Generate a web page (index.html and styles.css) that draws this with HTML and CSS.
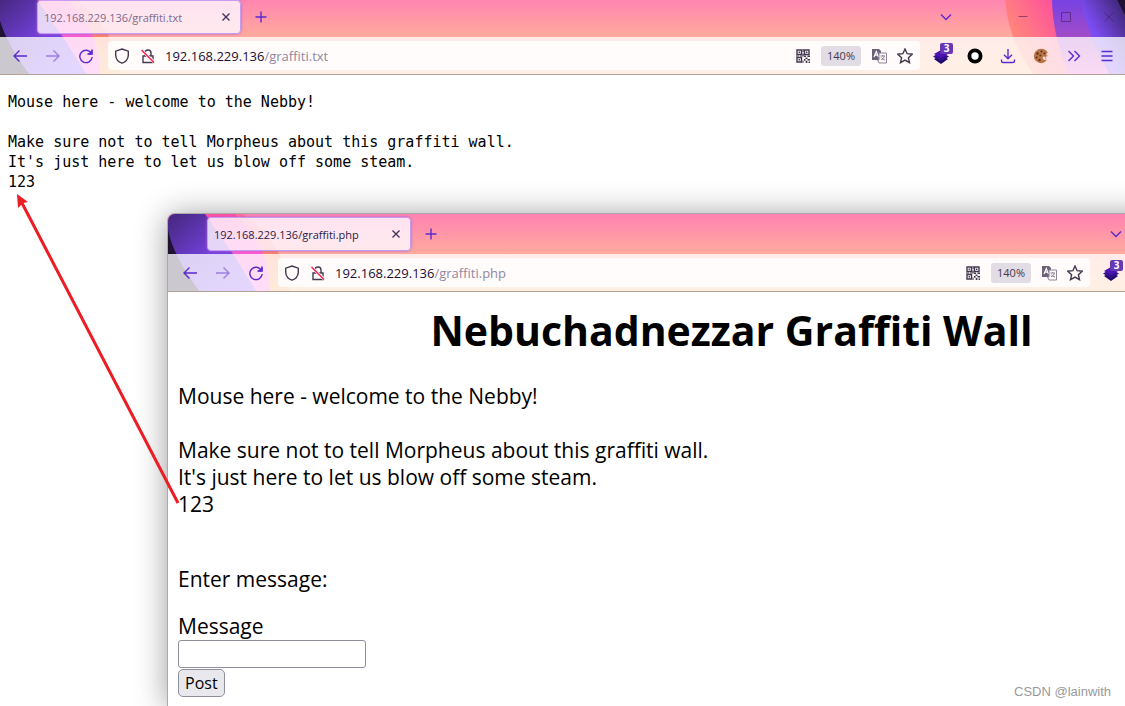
FILE: index.html
```html
<!DOCTYPE html>
<html lang="en">
<head>
<meta charset="utf-8">
<title>Graffiti wall</title>
<link rel="stylesheet" href="styles.css">
</head>
<body>
<svg class="defs" aria-hidden="true">
  <defs>
    <linearGradient id="g-violet" x1="0" y1="0" x2="1" y2="1"><stop offset="0" stop-color="#43267c"/><stop offset=".5" stop-color="#7442dd"/><stop offset="1" stop-color="#8a55ff"/></linearGradient>
    <linearGradient id="g-magenta" x1="0" y1="0" x2="0" y2="1"><stop offset="0" stop-color="#ff4fa0"/><stop offset=".5" stop-color="#ff5cd0"/><stop offset="1" stop-color="#ff70e0"/></linearGradient>
    <linearGradient id="g-peach" x1="0" y1="0" x2="0" y2="1"><stop offset="0" stop-color="#ff709c"/><stop offset=".5" stop-color="#ff8466"/><stop offset="1" stop-color="#ffac60"/></linearGradient>
    <linearGradient id="g-hot" x1="0" y1=".4" x2="1" y2="0"><stop offset="0" stop-color="#ff8a78"/><stop offset=".5" stop-color="#ff4d9f"/><stop offset="1" stop-color="#ff45a5"/></linearGradient>
    <linearGradient id="g-plum" x1="0" y1="0" x2="0" y2="1"><stop offset="0" stop-color="#7441e6"/><stop offset=".5" stop-color="#a04cc8"/><stop offset="1" stop-color="#f060d0"/></linearGradient>
    <linearGradient id="g-night" x1="1" y1="0" x2="0" y2="1"><stop offset="0" stop-color="#35205f"/><stop offset=".55" stop-color="#7a4bf0"/><stop offset="1" stop-color="#8a5cff"/></linearGradient>
  </defs>
  <symbol id="theme-left" viewBox="0 0 130 78">
    <path fill="url(#g-peach)" d="M0 0H75C100 18 118 42 123 78H0Z"/>
    <path fill="url(#g-magenta)" d="M0 0H67C88 20 102 44 102 78H0Z"/>
    <path fill="url(#g-violet)" d="M0 0H37L65 40L89 78H0Z"/>
    <path fill="#1f1233" d="M0 16Q6 44 32 78H0Z"/>
  </symbol>
  <symbol id="theme-right" viewBox="0 0 140 78">
    <path fill="url(#g-hot)" d="M20 0Q22 42 49 78H140V0Z"/>
    <path fill="url(#g-plum)" d="M67 0Q67 38 84 78H140V0Z"/>
    <path fill="url(#g-night)" d="M95 0Q103 40 125 78H140V0Z"/>
    <path fill="#1f1233" d="M131 0Q135 9 140 18V0Z"/>
  </symbol>
  <symbol id="i-back" viewBox="0 0 16 16"><path d="M15 8H2M7.5 2.5L2 8l5.500 5.500"/></symbol>
  <symbol id="i-forward" viewBox="0 0 16 16"><path d="M1 8h13M8.500 2.500L14 8l-5.500 5.500"/></symbol>
  <symbol id="i-reload" viewBox="0 0 16 16"><path d="M13.500 5.500A6.200 6.200 0 1 0 14.200 9M14 1.500V6H9.500" /><path fill="currentColor" d="M14.500 1.500V6.500H9.500Z" stroke="none"/></symbol>
  <symbol id="i-shield" viewBox="0 0 16 16"><path d="M8 1L14.300 3.200V7.500C14 11.500 11.500 14 8 15.200C4.500 14 2 11.500 1.700 7.500V3.200Z"/></symbol>
  <symbol id="i-lock" viewBox="0 0 16 16"><path d="M3 8h10v6.500H3ZM5 8V5a3 3 0 0 1 6 0V8"/><path stroke="#fff" stroke-width="3" d="M2 2.500L14 14"/><path stroke="#ff2450" stroke-width="1.600" d="M1.500 2L14 14.500"/></symbol>
  <symbol id="i-qr" viewBox="0 0 16 16"><path d="M2 2h4.500v4.500H2ZM9.500 2H14v4.500H9.500ZM2 9.500h4.500V14H2Z"/><path stroke="none" fill="currentColor" d="M3.600 3.600h1.400v1.400H3.600ZM11 3.600h1.400v1.400H11ZM3.600 11H5v1.400H3.600ZM7.500 1h1.200v3H7.500ZM7.300 5.500h1.400v3H7.300ZM1 7.500h3v1H1ZM5 7.500h2v1H5ZM9 7.500h2v1.500H9ZM12.500 7.500H15v1.500h-2.500ZM10.500 9.500h2V11h-2ZM9 11h1.500v1.700H9ZM12.500 11H15v1.500h-2.500ZM10.700 12.700h1.700V15h-1.700ZM7.500 12.500h1V15h-1ZM13.500 13.500H15V15h-1.500Z"/></symbol>
  <symbol id="i-translate" viewBox="0 0 16 16"><path fill="#6c6378" stroke="none" d="M1 1h7l2 2v9H1Z"/><path stroke="#fff" stroke-width="1.200" d="M3 9L5.300 3.500L7.500 9M3.800 7.200h3"/><path stroke="#8d869a" stroke-width="1" fill="#fff8f8" d="M8 5h7.500v10H8L6.500 12H8Z"/><path stroke="#8d869a" stroke-width="1" d="M9.500 8h4.500M11.700 7v1M13.500 8Q12.500 11 10 12M10.200 9.500Q11.500 11.500 14 12"/></symbol>
  <symbol id="i-star" viewBox="0 0 16 16"><path d="M8 1L10.100 5.700L15.200 6.200L11.400 9.700L12.500 14.700L8 12.100L3.500 14.700L4.600 9.700L.8 6.200L5.900 5.700Z"/></symbol>
  <symbol id="i-layers" viewBox="0 0 20 20"><path stroke="none" fill="#1e0866" d="M2 13L9 9l7 4-7 5Z"/><path stroke="none" fill="#32108e" d="M1 10.500L9 6l8 4.500-8 5Z"/><path stroke="none" fill="#4b12b4" d="M2 8L9 4l7 4-7 4Z"/></symbol>
  <symbol id="i-ring" viewBox="0 0 16 16"><circle cx="8" cy="8" r="7.500" fill="#000" stroke="none"/><circle cx="8" cy="8" r="3.700" fill="#fff" stroke="none"/></symbol>
  <symbol id="i-download" viewBox="0 0 16 16"><path d="M8 1v9.500M4 6.800l4 4 4-4M1.500 11.500V13a1.500 1.500 0 0 0 1.500 1.500h10a1.500 1.500 0 0 0 1.500-1.500V11.500"/></symbol>
  <symbol id="i-cookie" viewBox="0 0 16 16"><path fill="#b97548" stroke="none" d="M8 .8C11.500.8 14 2.500 14.800 5L12.800 6L14.800 8L12 9L10 8.500L9.800 11L12 12L14 11.500C12.500 14 10.500 15.200 8 15.200A7.200 7.200 0 0 1 8 .8Z"/><g fill="#603016" stroke="none"><circle cx="4.500" cy="5.500" r="1.200"/><circle cx="8.500" cy="3.500" r="1.100"/><circle cx="7.300" cy="7.500" r="1"/><circle cx="3.500" cy="9.500" r="1"/><circle cx="6.500" cy="12" r="1.200"/><circle cx="11.500" cy="5.500" r="1"/></g><circle cx="12.500" cy="10" r=".8" fill="#c78357" stroke="none"/></symbol>
  <symbol id="i-more" viewBox="0 0 16 16"><path d="M2.500 3L7.500 8l-5 5M8.500 3l5 5-5 5"/></symbol>
  <symbol id="i-menu" viewBox="0 0 16 16"><path d="M2.500 3.500h11M2.500 8h11M2.500 12.500h11"/></symbol>
  <symbol id="i-plus" viewBox="0 0 16 16"><path d="M8 2.500v11M2.500 8h11"/></symbol>
  <symbol id="i-chevron" viewBox="0 0 16 16"><path d="M3 5.500l5 5 5-5"/></symbol>
  <symbol id="i-close" viewBox="0 0 16 16"><path d="M4.500 4.500l7 7M11.500 4.500l-7 7"/></symbol>
  <symbol id="i-winclose" viewBox="0 0 16 16"><path d="M3.500 3.500l9 9M12.500 3.500l-9 9"/></symbol>
  <symbol id="i-max" viewBox="0 0 16 16"><path d="M3.500 3.500h9v9h-9Z"/></symbol>
  <symbol id="i-min" viewBox="0 0 16 16"><path d="M3.500 7.500h9"/></symbol>
</svg>

<main class="desktop">
  <section class="window window-back" aria-label="graffiti.txt">
    <header class="chrome">
      <svg class="theme theme-left"><use href="#theme-left"/></svg>
      <svg class="theme theme-right"><use href="#theme-right"/></svg>
      <div class="tabstrip">
        <div class="tab tab-dim"><span class="tab-title">192.168.229.136/graffiti.txt</span><button class="tab-close" aria-label="Close tab"><svg class="icon"><use href="#i-close"/></svg></button></div>
        <button class="tool" aria-label="New tab"><svg class="icon"><use href="#i-plus"/></svg></button>
        <div class="win-controls">
          <button class="list-tabs" aria-label="List all tabs"><svg class="icon"><use href="#i-chevron"/></svg></button>
          <button class="win-button" aria-label="Minimize"><svg class="icon thin"><use href="#i-min"/></svg></button>
          <button class="win-button" aria-label="Maximize"><svg class="icon thin"><use href="#i-max"/></svg></button>
          <button class="win-button" aria-label="Close"><svg class="icon thin"><use href="#i-winclose"/></svg></button>
        </div>
      </div>
      <nav class="toolbar">
        <button class="tool" aria-label="Back"><svg class="icon"><use href="#i-back"/></svg></button>
        <button class="tool" aria-label="Forward" disabled><svg class="icon"><use href="#i-forward"/></svg></button>
        <button class="tool" aria-label="Reload"><svg class="icon"><use href="#i-reload"/></svg></button>
        <div class="urlbar">
          <button class="url-tool" aria-label="Tracking protection"><svg class="icon"><use href="#i-shield"/></svg></button>
          <button class="url-tool" aria-label="Connection not secure"><svg class="icon"><use href="#i-lock"/></svg></button>
          <div class="address" role="textbox" contenteditable="true" spellcheck="false" aria-label="Address">192.168.229.136<span class="path">/graffiti.txt</span></div>
          <button class="url-tool" aria-label="QR code"><svg class="icon"><use href="#i-qr"/></svg></button>
          <button class="zoom">140%</button>
          <button class="url-tool" aria-label="Translate"><svg class="icon"><use href="#i-translate"/></svg></button>
          <button class="url-tool" aria-label="Bookmark"><svg class="icon"><use href="#i-star"/></svg></button>
        </div>
        <button class="tool" aria-label="Layers"><svg class="icon icon-large"><use href="#i-layers"/></svg><span class="badge">3</span></button>
        <button class="tool" aria-label="Ring"><svg class="icon"><use href="#i-ring"/></svg></button>
        <button class="tool" aria-label="Downloads"><svg class="icon"><use href="#i-download"/></svg></button>
        <button class="tool" aria-label="Cookies"><svg class="icon"><use href="#i-cookie"/></svg></button>
        <button class="tool" aria-label="More tools"><svg class="icon"><use href="#i-more"/></svg></button>
        <button class="tool" aria-label="Menu"><svg class="icon"><use href="#i-menu"/></svg></button>
      </nav>
    </header>
    <pre class="plain">Mouse here - welcome to the Nebby!

Make sure not to tell Morpheus about this graffiti wall.
It's just here to let us blow off some steam.
123</pre>
  </section>

  <section class="window window-front" aria-label="graffiti.php">
    <header class="chrome">
      <svg class="theme theme-left"><use href="#theme-left"/></svg>
      <svg class="theme theme-right"><use href="#theme-right"/></svg>
      <div class="tabstrip">
        <div class="tab"><span class="tab-title">192.168.229.136/graffiti.php</span><button class="tab-close" aria-label="Close tab"><svg class="icon"><use href="#i-close"/></svg></button></div>
        <button class="tool" aria-label="New tab"><svg class="icon"><use href="#i-plus"/></svg></button>
        <div class="win-controls">
          <button class="list-tabs" aria-label="List all tabs"><svg class="icon"><use href="#i-chevron"/></svg></button>
          <button class="win-button" aria-label="Minimize"><svg class="icon thin"><use href="#i-min"/></svg></button>
          <button class="win-button" aria-label="Maximize"><svg class="icon thin"><use href="#i-max"/></svg></button>
          <button class="win-button" aria-label="Close"><svg class="icon thin"><use href="#i-winclose"/></svg></button>
        </div>
      </div>
      <nav class="toolbar">
        <button class="tool" aria-label="Back"><svg class="icon"><use href="#i-back"/></svg></button>
        <button class="tool" aria-label="Forward" disabled><svg class="icon"><use href="#i-forward"/></svg></button>
        <button class="tool" aria-label="Reload"><svg class="icon"><use href="#i-reload"/></svg></button>
        <div class="urlbar">
          <button class="url-tool" aria-label="Tracking protection"><svg class="icon"><use href="#i-shield"/></svg></button>
          <button class="url-tool" aria-label="Connection not secure"><svg class="icon"><use href="#i-lock"/></svg></button>
          <div class="address" role="textbox" contenteditable="true" spellcheck="false" aria-label="Address">192.168.229.136<span class="path">/graffiti.php</span></div>
          <button class="url-tool" aria-label="QR code"><svg class="icon"><use href="#i-qr"/></svg></button>
          <button class="zoom">140%</button>
          <button class="url-tool" aria-label="Translate"><svg class="icon"><use href="#i-translate"/></svg></button>
          <button class="url-tool" aria-label="Bookmark"><svg class="icon"><use href="#i-star"/></svg></button>
        </div>
        <button class="tool" aria-label="Layers"><svg class="icon icon-large"><use href="#i-layers"/></svg><span class="badge">3</span></button>
        <button class="tool" aria-label="Ring"><svg class="icon"><use href="#i-ring"/></svg></button>
        <button class="tool" aria-label="Downloads"><svg class="icon"><use href="#i-download"/></svg></button>
        <button class="tool" aria-label="Cookies"><svg class="icon"><use href="#i-cookie"/></svg></button>
        <button class="tool" aria-label="More tools"><svg class="icon"><use href="#i-more"/></svg></button>
        <button class="tool" aria-label="Menu"><svg class="icon"><use href="#i-menu"/></svg></button>
      </nav>
    </header>
    <div class="wall">
      <h1 class="wall-title">Nebuchadnezzar Graffiti Wall</h1>
      <p class="wall-text">Mouse here - welcome to the Nebby!<br><br>Make sure not to tell Morpheus about this graffiti wall.<br>It's just here to let us blow off some steam.<br>123</p>
      <form class="wall-form">
        <p class="prompt">Enter message:</p>
        <label for="message">Message</label>
        <input class="message" id="message" type="text">
        <button class="post" type="button">Post</button>
      </form>
    </div>
  </section>

  <svg class="arrow" width="200" height="520" aria-hidden="true"><path d="M178 503L22 203" stroke="#ed1c24" stroke-width="3"/><path fill="#ed1c24" d="M17 194L28 202L23 203L18 208Z"/></svg>
  <span class="watermark">CSDN @lainwith</span>
</main>
</body>
</html>
```
FILE: styles.css
```css
* { box-sizing: border-box; }

body { margin: 0; font-family: "Open Sans", "Noto Sans", sans-serif; color: #000; }

button { margin: 0; padding: 0; border: 0; background: none; color: inherit; font: inherit; }

.defs { position: absolute; width: 0; height: 0; }

.desktop { position: relative; height: 100vh; overflow: hidden; background: #fff; }

.window { position: absolute; bottom: 0; width: calc(100% + 2px); background: #fff; }
.window-back { top: -3px; left: -2px; }
.window-front {
  top: 214px;
  left: 168px;
  border-radius: 7px 0 0 0;
  box-shadow: 0 0 0 1px #aaa, 0 2px 32px rgba(0, 0, 0, .42);
}

.chrome {
  position: relative;
  overflow: hidden;
  border-radius: inherit;
  background: linear-gradient(#ff82b2 0, #ffab9d 40px, #ffc08c 78px);
  color: #5b2ad0;
}

.theme { position: absolute; top: 0; height: 78px; }
.theme-left { left: 0; width: 130px; }
.theme-right { right: 0; width: 140px; }

.tabstrip { position: relative; display: flex; align-items: center; height: 40px; padding-left: 39px; }

.tab {
  display: flex;
  align-items: center;
  width: 204px;
  height: 34px;
  padding: 0 6px;
  border: 1px solid #c79cf0;
  border-radius: 4px;
  background: rgba(255, 248, 255, .82);
  box-shadow: 0 0 3px #b05fd0;
  color: #2a1b45;
}
.tab-title { flex: 1; font-size: 11px; white-space: nowrap; }
.tab-dim .tab-title { color: #7d6b8b; }
.tab-close { display: flex; color: #43345c; }

.icon { width: 16px; height: 16px; fill: none; stroke: currentColor; stroke-width: 1.4; }
.icon-large { width: 20px; height: 20px; }
.thin { stroke-width: 1; }

.tool { position: relative; display: flex; flex: none; align-items: center; justify-content: center; width: 33px; height: 33px; }
.tabstrip .tool { margin-left: 3px; }
.tool:disabled { opacity: .5; }

.win-controls { display: flex; align-items: center; margin-left: auto; margin-right: -5px; }
.list-tabs { display: flex; margin-right: 47px; }
.win-button { display: flex; justify-content: center; width: 43px; color: rgba(60, 25, 80, .55); }

.toolbar {
  position: relative;
  display: flex;
  align-items: center;
  height: 38px;
  padding: 0 2px 0 5px;
  border-bottom: 1px solid #b5a096;
  background: rgba(255, 255, 255, .77);
}

.urlbar {
  display: flex;
  flex: 1;
  align-items: center;
  height: 29px;
  margin: 0 5px 0 6px;
  padding: 0 2px 0 1px;
  border-radius: 4px;
  background: rgba(255, 255, 255, .82);
  color: #43384f;
}
.url-tool { display: flex; justify-content: center; width: 26px; }
.address { flex: 1; margin-left: 4px; font-size: 13px; color: #1c0d33; white-space: nowrap; outline: none; }
.path { color: #91879f; }
.zoom { width: 40px; height: 20px; margin: 0 5px; border-radius: 3px; background: #e2dce4; font-size: 11px; }

.badge {
  position: absolute;
  top: 4px;
  right: 5px;
  width: 13px;
  height: 11px;
  border-radius: 2px;
  background: #6938b5;
  color: #fff;
  font-size: 10px;
  font-weight: 700;
  line-height: 11px;
}

.plain { margin: 0; padding: 17px 10px; font-family: "DejaVu Sans Mono", monospace; font-size: 15px; line-height: 20px; }

.wall { padding: 8px 10px; font-size: 21px; line-height: 27px; }
.wall-title { margin: 0 0 23px; font-size: 41px; line-height: 60px; text-align: center; }
.wall-text { margin: 0 0 48px; }
.prompt { margin: 0 0 20px; }
.wall-form { display: flex; flex-direction: column; align-items: flex-start; }
.message { width: 188px; height: 28px; border: 1px solid #8f8f9d; border-radius: 3px; background: #fff; font: inherit; font-size: 16px; }
.post {
  height: 28px;
  margin-top: 1px;
  padding: 0 6px;
  border: 1px solid #8f8f9d;
  border-radius: 5px;
  background: #e9e9ed;
  font-size: 16px;
  line-height: 24px;
}

.arrow { position: absolute; top: 0; left: 0; }

.watermark {
  position: absolute;
  right: 14px;
  bottom: 7px;
  color: #999;
  font-family: "Liberation Sans", Arial, sans-serif;
  font-size: 13px;
}
```
